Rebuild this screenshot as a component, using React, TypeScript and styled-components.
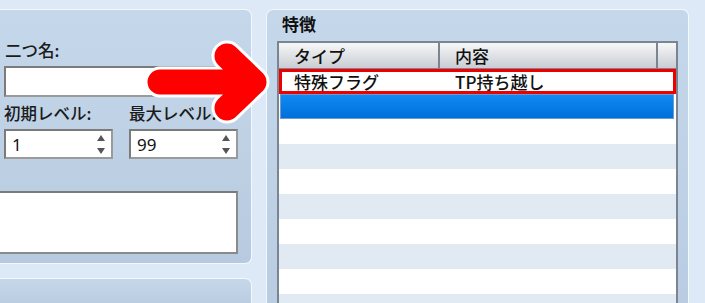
import React from "react";
import styled, { createGlobalStyle } from "styled-components";

const GlobalStyle = createGlobalStyle`
  body {
    margin: 0;
    background: #dde9f7;
    font-family: "Noto Sans CJK JP", "Noto Sans", sans-serif;
    overflow: hidden;
  }
`;

const Page = styled.div`
  position: relative;
  width: 705px;
  height: 303px;
  overflow: hidden;
  display: flex;
  gap: 14px;
  padding-top: 9px;
  box-sizing: border-box;
  background: #dde9f7;
`;

const LeftColumn = styled.div`
  width: 252px;
  display: flex;
  flex-direction: column;
  gap: 14px;
`;

const Panel = styled.div<{ $grow?: boolean }>`
  box-sizing: border-box;
  height: ${(p) => (p.$grow ? "auto" : "255px")};
  flex: ${(p) => (p.$grow ? "1" : "none")};
  background: linear-gradient(#c5d8eb, #b7cadf);
  border: 1px solid #f3f8fd;
  border-left: none;
  border-radius: ${(p) => (p.$grow ? "0 7px 0 0" : "0 7px 7px 0")};
  padding: 30px 13px 0 4px;
  display: flex;
  flex-direction: column;
`;

const Label = styled.div<{ $indent?: number }>`
  font-size: 16.5px;
  font-weight: 500;
  line-height: 20px;
  color: #1b1b1b;
  padding-left: ${(p) => p.$indent ?? 0}px;
  margin-bottom: 6px;
  white-space: nowrap;
`;

const TextInput = styled.div`
  box-sizing: border-box;
  height: 31px;
  background: #fff;
  border: 2px solid #7b7b7b;
  border-right-color: #9a9a9a;
  border-bottom-color: #9a9a9a;
  margin-bottom: 6px;
`;

const SpinRow = styled.div`
  display: grid;
  grid-template-columns: 109px 109px;
  column-gap: 16px;
`;

const SpinBox = styled.div`
  box-sizing: border-box;
  height: 30px;
  background: #fff;
  border: 2px solid #7b7b7b;
  border-right-color: #9a9a9a;
  border-bottom-color: #9a9a9a;
  display: flex;
  align-items: center;
  justify-content: space-between;
  padding: 0 6px 0 6px;
  font-family: "Noto Sans", sans-serif;
  font-size: 17px;
  color: #111;
`;

const Arrows = styled.div`
  display: flex;
  flex-direction: column;
  gap: 7px;
`;

const Tri = styled.span<{ $down?: boolean }>`
  width: 0;
  height: 0;
  border-left: 4px solid transparent;
  border-right: 4px solid transparent;
  ${(p) =>
    p.$down ? "border-top: 6px solid #555;" : "border-bottom: 6px solid #555;"}
`;

const TextArea = styled.div`
  box-sizing: border-box;
  height: 63px;
  margin: 32px 0 0 -20px;
  background: #fff;
  border: 2px solid #7b7b7b;
  border-right-color: #8a8a8a;
  border-bottom-color: #8a8a8a;
`;

const RightPanel = styled.div`
  box-sizing: border-box;
  width: 423px;
  background: linear-gradient(#c5d8eb, #b9cce1);
  border: 1px solid #f3f8fd;
  border-bottom: none;
  border-radius: 7px 7px 0 0;
  padding: 4px 10px 0 10px;
  display: flex;
  flex-direction: column;
`;

const Title = styled.div`
  font-size: 17px;
  font-weight: bold;
  line-height: 20px;
  color: #111;
  padding-left: 5px;
  margin-bottom: 7px;
`;

const Table = styled.div`
  flex: 1;
  background: #fff;
  border: 2px solid #7b8591;
  border-bottom: none;
`;

const Grid = styled.div`
  display: grid;
  grid-template-columns: 161px 218px 1fr;
`;

const HeaderRow = styled(Grid)`
  height: 26px;
  background: linear-gradient(#f6f7f8, #c9cdd3);
  border-bottom: 1px solid #7b8591;
  box-sizing: border-box;
`;

const HeadCell = styled.div<{ $last?: boolean }>`
  font-size: 17px;
  font-weight: 500;
  line-height: 25px;
  color: #111;
  padding-left: 15px;
  border-right: ${(p) => (p.$last ? "none" : "2px solid #7b8591")};
`;

const Row = styled(Grid)<{ $alt?: boolean; $mark?: boolean; $selected?: boolean }>`
  box-sizing: border-box;
  height: 25px;
  background: ${(p) =>
    p.$selected
      ? "linear-gradient(#1089f3, #006fdb)"
      : p.$alt
      ? "#e1e9f2"
      : "#fff"};
  ${(p) => (p.$mark ? "outline: 3px solid #ee0000; outline-offset: -3px;" : "")}
  ${(p) => (p.$selected ? "border: 1px solid #6c9ccb; margin: 0 2px 0 1px;" : "")}
`;

const Cell = styled.div`
  font-size: 17px;
  font-weight: 500;
  line-height: 25px;
  color: #111;
  padding-left: 15px;
  white-space: nowrap;
`;

const Overlay = styled.svg`
  position: absolute;
  left: 0;
  top: 0;
  pointer-events: none;
`;

const arrowPath = "M160 82 L252 82 M227 56 L254 82 L227 108";

export default function App() {
  const blankRows = Array.from({ length: 8 }, (_, i) => i);
  return (
    <>
      <GlobalStyle />
      <Page>
        <LeftColumn>
          <Panel>
            <Label $indent={1}>二つ名:</Label>
            <TextInput />
            <SpinRow>
              <Label>初期レベル:</Label>
              <Label>最大レベル:</Label>
              <SpinBox>
                1
                <Arrows>
                  <Tri />
                  <Tri $down />
                </Arrows>
              </SpinBox>
              <SpinBox>
                99
                <Arrows>
                  <Tri />
                  <Tri $down />
                </Arrows>
              </SpinBox>
            </SpinRow>
            <TextArea />
          </Panel>
          <Panel $grow />
        </LeftColumn>
        <RightPanel>
          <Title>特徴</Title>
          <Table>
            <HeaderRow>
              <HeadCell>タイプ</HeadCell>
              <HeadCell>内容</HeadCell>
              <HeadCell $last />
            </HeaderRow>
            <Row $mark>
              <Cell>特殊フラグ</Cell>
              <Cell>TP持ち越し</Cell>
              <Cell />
            </Row>
            <Row $selected />
            {blankRows.map((i) => (
              <Row key={i} $alt={i % 2 === 1} />
            ))}
          </Table>
        </RightPanel>
        <Overlay width="705" height="303" viewBox="0 0 705 303">
          <path
            d={arrowPath}
            fill="none"
            stroke="#fff"
            strokeWidth={31}
            strokeLinecap="round"
            strokeLinejoin="round"
          />
          <path
            d={arrowPath}
            fill="none"
            stroke="#ff0000"
            strokeWidth={25}
            strokeLinecap="round"
            strokeLinejoin="round"
          />
        </Overlay>
      </Page>
    </>
  );
}
